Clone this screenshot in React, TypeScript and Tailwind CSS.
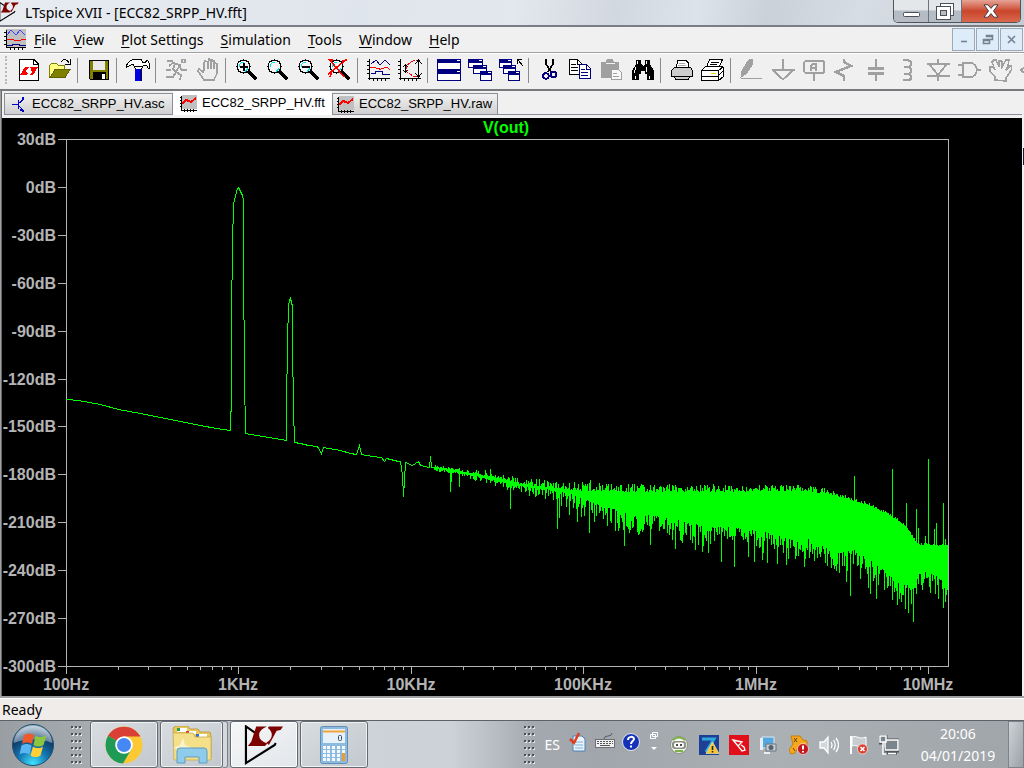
import type { ReactNode } from 'react'

// ============================================================
// TRACE DATA
// ============================================================
const PLOT = { left: 66, right: 948, top: 139, bottom: 666, decade: 172.4 }

const LOW_BAND =
  'M66 399L78 400L100 404L118 409L140 413L170 419L200 425L216 428L230 430L231 393L231 318L232 244L233 204L235 195L237 188L238 187L240 191L242 195L243 200L243 260L244 376L245 433L262 436L286 440L286 407L287 341L288 306L289 300L290 298L291 302L292 306L292 342L293 408L294 442L300 443L308 445L317 446L321 453L323 447L340 450L350 453L356 454L359 445L361 454L372 456L381 457L384 461L386 458L398 461L400 461L402 475L403 496L404 479L405 462L412 465L418 461L420 465L429 467L430 456L431 467L440 468'

// [x, y] knots of the noise band
const NOISE_TOP = [[434, 467], [460, 471], [480, 475], [500, 479], [520, 484], [550, 488], [583, 491], [640, 492], [700, 492], [800, 491], [830, 494], [850, 500], [870, 506], [885, 513], [895, 519], [905, 527], [912, 537], [918, 545], [949, 546]]
const NOISE_BOTTOM = [[434, 468], [460, 473], [480, 477], [500, 482], [520, 486], [550, 489], [567, 493], [600, 505], [633, 515], [650, 515], [667, 518], [700, 525], [733, 527], [767, 532], [800, 542], [810, 538], [833, 553], [857, 550], [867, 558], [883, 570], [900, 583], [913, 587], [920, 571], [933, 573], [949, 586]]
const TOP_JITTER = [[434, 2], [480, 4], [510, 6], [560, 9], [690, 8], [800, 7], [860, 3], [949, 2]]
const BOTTOM_JITTER = [[434, 3], [500, 6], [550, 11], [570, 18], [620, 22], [800, 22], [900, 20], [949, 14]]

const DIPS: Record<number, number> = {
  450: 492, 451: 482, 459: 487, 510: 509, 557: 529, 559: 518, 569: 515, 577: 522, 589: 533, 624: 546, 650: 545,
  675: 549, 682: 543, 695: 550, 702: 552, 708: 553, 721: 562, 734: 567, 748: 557, 754: 562, 762: 560, 767: 563,
  777: 564, 786: 565, 804: 567, 827: 566, 846: 582, 850: 596, 860: 579, 868: 588, 870: 594, 876: 599, 892: 600,
  897: 605, 901: 602, 905: 609, 908: 613, 913: 622, 916: 594, 922: 590, 930: 593, 935: 594, 938: 599, 943: 608, 945: 602,
}
const SPURS: Record<number, number> = {
  485: 470, 490: 469, 590: 480, 854: 476, 892: 469, 906: 503, 916: 509, 918: 528, 925: 536, 928: 459, 934: 529, 936: 523, 943: 503, 945: 539,
}

function lerp(knots: number[][], x: number) {
  const i = Math.max(1, knots.findIndex(k => k[0] >= x))
  const [x0, y0] = knots[i - 1]
  const [x1, y1] = knots[i]
  return y0 + ((x - x0) / (x1 - x0)) * (y1 - y0)
}

function buildNoise() {
  let seed = 82
  const rand = () => {
    seed = (seed * 1664525 + 1013904223) % 4294967296
    return seed / 4294967296
  }
  let d = ''
  for (let x = 434; x < PLOT.right; x++) {
    const up = lerp(TOP_JITTER, x) * rand() ** 1.6
    const down = lerp(BOTTOM_JITTER, x) * rand() ** 1.7
    const top = Math.min(SPURS[x] ?? 999, Math.round(lerp(NOISE_TOP, x) - up))
    const bottom = Math.max(DIPS[x] ?? 0, Math.round(lerp(NOISE_BOTTOM, x) + down), top + 1)
    d += `M${x} ${top}h1V${bottom}h-1z`
  }
  return d
}
const NOISE = buildNoise()

const Y_LABELS = ['30dB', '0dB', '-30dB', '-60dB', '-90dB', '-120dB', '-150dB', '-180dB', '-210dB', '-240dB', '-270dB', '-300dB']
const X_LABELS = ['100Hz', '1KHz', '10KHz', '100KHz', '1MHz', '10MHz']

function buildTicks() {
  let d = ''
  Y_LABELS.forEach((_, i) => { d += `M58 ${Math.round(PLOT.top + i * 47.9) + 0.5}H66` })
  X_LABELS.forEach((_, i) => {
    for (let m = 1; m < 10; m++) {
      const x = Math.round(PLOT.left + (i + Math.log10(m)) * PLOT.decade) + 0.5
      if (x < PLOT.right) d += `M${x} 667v${m === 1 ? 7 : 3}`
    }
  })
  return d
}
const TICKS = buildTicks()

function Plot() {
  return (
    <svg viewBox="2 118 1020 578" className="block h-full w-full font-['Liberation_Sans'] text-base font-bold" role="img" aria-label="V(out) spectrum">
      <g shapeRendering="crispEdges">
        <rect x="66.5" y="139.5" width="882" height="527" fill="none" stroke="#b4b4b4" />
        <path d={TICKS} stroke="#b4b4b4" fill="none" />
        <path d={LOW_BAND} stroke="#00ff00" fill="none" transform="translate(.5 .5)" />
        <path d={NOISE} fill="#00ff00" />
      </g>
      <text x="506" y="133" textAnchor="middle" fill="#00ff00">V(out)</text>
      {Y_LABELS.map((label, i) => (
        <text key={label} x="56" y={Math.round(145 + i * 47.9)} textAnchor="end" fill="#b4b4b4">{label}</text>
      ))}
      {X_LABELS.map((label, i) => (
        <text key={label} x={Math.round(66 + i * PLOT.decade)} y="690" textAnchor="middle" fill="#b4b4b4">{label}</text>
      ))}
    </svg>
  )
}

// ============================================================
// TOOLBAR ICONS (24px grid)
// ============================================================
const K = '#000000'
const G = '#a0a0a0'
const N = '#000080'

function Lens({ children }: { children?: ReactNode }) {
  return (
    <>
      <circle cx="8.500" cy="8.500" r="6.500" fill="#f4f4f4" stroke={K} strokeWidth="1.200" />
      <path d="M4.500 9V6.500l2-2H9M10 13.500l3-3" stroke="#00e5e5" fill="none" />
      <path d="M13.500 13.500l8 8" stroke={K} strokeWidth="3" />
      {children}
    </>
  )
}

function MiniWindow({ x, y, w = 12, h = 9 }: { x: number; y: number; w?: number; h?: number }) {
  return (
    <>
      <rect x={x + 0.5} y={y + 0.5} width={w - 1} height={h - 1} fill="#fff" stroke={N} />
      <rect x={x} y={y} width={w} height="4" fill={N} />
      <path d={`M${x + w - 4} ${y + 1.5}h3`} stroke="#fff" />
    </>
  )
}

const AXES = 'M2.500 1v21M1 20.500h22M0 3.500h2M0 7.500h2M0 11.500h2M0 15.500h2M6.500 20v3M10.500 20v3M14.500 20v3M18.500 20v3'

const ICONS: Record<string, ReactNode> = {
  New: (
    <>
      <path d="M2.500 1.500H17l4.500 4.500V22.500H2.500Z" fill="#fff" stroke={K} />
      <path d="M16.500 1.500V6.500H21.500" fill="none" stroke={K} />
      <path d="M3 17l5-8h4l-3 3v2l2 1-1 2zM12 9h9l-5 8h-3l2-3-1-3z" fill="#f00" />
    </>
  ),
  Open: (
    <>
      <path d="M1.500 19.500V7.500l2-2h5l2 2h6v4H7l-5 8z" fill="#ffff80" stroke="#808000" />
      <path d="M2 19.500l5-8h15l-5 8z" fill="#808000" stroke="#606000" />
      <path d="M13 4c2-4 6-3 8 1M22 1v5h-5" stroke={K} fill="none" />
    </>
  ),
  Save: (
    <>
      <path d="M2.500 2.500h19v19h-18l-1-1z" fill="#808000" stroke={K} />
      <path d="M6 3h12v9H6z" fill="#e8e8e8" />
      <path d="M6 14h13v8H6z" fill={K} />
      <path d="M15 16h3v5h-3z" fill="#fff" />
    </>
  ),
  'Control Panel': (
    <>
      <path d="M.5 9.500c0-4 3-7 7-8h8l1 3h3l1-2h1l2 3v5h-1l-2-3h-3l-2 3.500H9.500l-2-4c-3-1-5 1-7 2.500z" fill="#fff" stroke={K} />
      <path d="M9 8.500h7" stroke={K} />
      <path d="M9 11h7v12H9z" fill="#0000e0" />
      <path d="M14 11h2v12h-2z" fill={N} />
    </>
  ),
  Run: <path d="M17 1.500h3v3h-3zM2 3h6M1 12h5M4 8l4-3 7 2-4 7 5 3-1 5M11 14l-3 5H1M14 8l3 4h5M10 6l-2 5 4 4" fill="none" stroke={G} strokeWidth="1.800" />,
  Halt: <path d="M7 14L3 11 2 13l6 9h10l3-7V6l-2-1-1 6V3l-2-1-1 9V2l-2-1-1 10V4L9 3 8 5zM8 13V6" fill="#eee" stroke={G} strokeWidth="1.500" />,
  'Zoom In': <Lens><path d="M4.500 8.500h8M8.500 4.500v8" stroke={K} strokeWidth="2" /></Lens>,
  Zoom: <Lens />,
  'Zoom Back': <Lens><path d="M4.500 8.500h8" stroke={K} strokeWidth="2" /></Lens>,
  'Zoom Fit': <Lens><path d="M1 1l15 18M0 16L18 2M1 2h4M14 3l5-1M2 19l2-6" stroke="#f00" strokeWidth="1.500" /></Lens>,
  'Autorange': (
    <g fill="none">
      <path d={AXES} stroke={K} />
      <path d="M4 6l5-4 4 5 5-5 5 5M4 15h4v-2h7v3h8" stroke={N} />
      <path d="M3 10c5-3 7 2 11 1s6-3 9 1" stroke="#f00" />
    </g>
  ),
  'Toggle Log': (
    <g fill="none">
      <path d={AXES} stroke={K} />
      <path d="M22 2.500h-6l-8 5v6l8 5h6" stroke="#f00" strokeDasharray="4 1" />
      <path d="M20.500 3v15M17 6l3.500-4L24 6M17 15l3.500 4 3.500-4M7.500 7v7M5 9l2.500-2L10 9M5 12l2.500 2 2.500-2" stroke={K} />
    </g>
  ),
  'Tile Horizontally': (
    <>
      <MiniWindow x={0} y={1} w={24} h={11} />
      <MiniWindow x={0} y={12} w={24} h={11} />
    </>
  ),
  Cascade: (
    <>
      <MiniWindow x={0} y={1} w={15} />
      <MiniWindow x={5} y={7} w={14} />
      <MiniWindow x={12} y={13} h={10} />
    </>
  ),
  'Close All': (
    <>
      <MiniWindow x={0} y={1} w={13} />
      <MiniWindow x={4} y={7} w={13} />
      <MiniWindow x={9} y={13} h={10} />
      <path d="M18 1.500h5M18.500 1v5M19 2l5 6" stroke={K} />
    </>
  ),
  Cut: (
    <g fill="none">
      <path d="M8 1v5l5 8M15 1v5l-5 8" stroke={K} strokeWidth="1.800" />
      <circle cx="8" cy="18" r="2.800" stroke={N} strokeWidth="1.800" />
      <circle cx="15.500" cy="16.500" r="2.800" stroke={N} strokeWidth="1.800" />
    </g>
  ),
  Copy: (
    <>
      <path d="M.5 1.500h8l4 4v11H.5z" fill="#fff" stroke={K} />
      <path d="M2 6.500h5M2 9.500h7M2 12.500h7M8.500 2v4h4" stroke={K} fill="none" />
      <path d="M10.500 6.500h7l4 4v10h-11z" fill="#fff" stroke={N} />
      <path d="M12 11.500h4M12 14.500h7M12 17.500h7M17.500 7v4h4" stroke={N} fill="none" />
    </>
  ),
  Paste: (
    <>
      <path d="M1 4h5l1-3h6l1 3h5v16H1z" fill={G} />
      <path d="M6 5.500h9" stroke="#f0f0f0" />
      <path d="M11.500 11.500h7l3 3v7h-10z" fill="#f8f8f8" stroke={G} />
      <path d="M13 15.500h4M13 18.500h6" stroke={G} />
    </>
  ),
  Find: (
    <>
      <path d="M5 2h5v4l2 2 2-2V2h5v4l4 7v9h-7v-6h-2v-3h-4v3H8v6H1v-9l4-7z" fill={K} />
      <path d="M6.500 3v3M15.500 3v3M5 9l-2 6M16 9l-1 5M4 18v3M18 18v3" stroke="#fff" />
    </>
  ),
  'Print Preview': (
    <>
      <path d="M6.500 10l1-8h8l3 3v5" fill="#fff" stroke={K} />
      <path d="M4.500 9.500h16l2 3v6h-3l-1 3H6l-2-3H1.500v-6z" fill="#ccc" stroke={K} />
      <path d="M1.500 18.500h20" stroke={K} />
      <path d="M9 5.500h6M8 7.500h8" stroke="#aaa" />
    </>
  ),
  Print: (
    <>
      <path d="M5.500 9l3-7.500h13L18 9" fill="#fff" stroke={K} />
      <path d="M.5 12.500l4-4h17l1 2v8l-5 4H.5z" fill="#fff" stroke={K} />
      <path d="M.5 12.500h17v10M17.500 12.500l5-4M.5 18.500h17M10 4.500h8M9 6.500h7M18 17l4-4" stroke={K} fill="none" />
      <path d="M10 15.500h5" stroke="#e8e000" />
    </>
  ),
  Wire: <path d="M1 20.500h21M1 19l1-6 6-10 2-2h3l-1 6-6 9z" fill={G} stroke={G} />,
  Ground: <path d="M12 1v10M1 11.500h23M2 12l10 9.500L22 12" fill="none" stroke={G} strokeWidth="2" />,
  'Label Net': (
    <g fill="none" stroke={G}>
      <rect x="2" y="3" width="20" height="12" rx="2.500" strokeWidth="2.200" />
      <path d="M9 13V8l2-2h3v7M9 10h5M12 16v7" strokeWidth="2" />
    </g>
  ),
  Resistor: <path d="M11 1v3l7 4L3 14l8 4v5" fill="none" stroke={G} strokeWidth="2.400" />,
  Capacitor: <path d="M12 1v8M12 16v7" fill="none" stroke={G} strokeWidth="2" />,
  Inductor: <path d="M8 2h5l3 2v3l-2 2H9h5l2 2v3l-2 2H9h5l2 2v3l-2 1H8" fill="none" stroke={G} strokeWidth="2.400" />,
  Diode: <path d="M12 1v5M12 18v5M1 18h23M1 6h23M4 7l8 10 8-10" fill="none" stroke={G} strokeWidth="2" />,
  Component: <path d="M1 7h6M1 17h6M6 5h7c9 0 9 14 0 14H6zM19 12h5" fill="none" stroke={G} strokeWidth="2" />,
  Move: <path d="M7 22v-3l-5-6V9h3l2 3-3-8 2-2h2l3 7V3h2l1 1v5l4-7h3l-1 6-2 4 4-4h2v3l-4 6-2 3v3z" fill="#f0f0f0" stroke={G} strokeWidth="1.500" />,
  Drag: <path d="M2 12l4-3h14v9c-3-2-8-2-12-4H4z" fill="none" stroke={G} strokeWidth="2" />,
}
ICONS.Capacitor = (
  <>
    {ICONS.Capacitor}
    <path d="M4 9h16v3H4zM4 14h16v3H4z" fill={G} />
  </>
)

const TOOL_GROUPS = [
  ['New', 'Open'],
  ['Save'],
  ['Control Panel'],
  ['Run', 'Halt'],
  ['Zoom In', 'Zoom', 'Zoom Back', 'Zoom Fit'],
  ['Autorange', 'Toggle Log'],
  ['Tile Horizontally', 'Cascade', 'Close All'],
  ['Cut', 'Copy', 'Paste', 'Find'],
  ['Print Preview', 'Print'],
  ['Wire', 'Ground', 'Label Net', 'Resistor', 'Capacitor', 'Inductor', 'Diode', 'Component', 'Move', 'Drag'],
]

function Toolbar() {
  return (
    <div className="flex h-9 shrink-0 items-center overflow-hidden border-t border-white bg-[#f0f0f0] pb-[3px] pl-[5px]">
      <div className="mr-1 h-7 w-1 shrink-0 border-l-2 border-dotted border-[#b8b8b8]" />
      {TOOL_GROUPS.map((group, i) => (
        <div key={group[0]} className="flex shrink-0 items-center">
          {i > 0 && <div className="mr-[5px] ml-[2px] h-[25px] w-px bg-[#8c8c8c]" />}
          {group.map(name => (
            <button key={name} type="button" aria-label={name} className="flex h-8 w-[31px] items-center justify-center">
              <svg viewBox="0 0 24 24" className="size-6" shapeRendering="crispEdges">{ICONS[name]}</svg>
            </button>
          ))}
        </div>
      ))}
    </div>
  )
}

// ============================================================
// WINDOW CHROME
// ============================================================
function LogoMark({ className }: { className: string }) {
  return (
    <svg viewBox="0 0 40 41" className={className}>
      <path d="M11 8L1.500 1.500v37.500L31 20.500l1-2" fill="none" stroke="#000" strokeWidth="2.200" />
      <path d="M12 1.500h11q-8 3-8 9 0 6 8.500 8.500L21 21.500H3.500L7 17zM25 1.500h14.500L37 5l-4 1-8 14.500-2.500-2.500q5.500-3 5.500-8 0-4-4-7z" fill="#7b0000" />
    </svg>
  )
}

function TitleBar() {
  return (
    <header className="flex h-[27px] shrink-0 items-start border-b-2 border-[#7a7e84] bg-[linear-gradient(100deg,#e8ecf1_0%,#dfe5ec_35%,#e3e8ee_50%,#d2d8e0_60%,#dde3ea_68%,#cbd1d8_75%,#d7dde5_84%,#c5ccd4_100%)]">
      <LogoMark className="-ml-px h-6 w-5" />
      <h1 className="ml-[6px] flex-1 font-['Noto_Sans'] text-sm leading-[26px] text-black">LTspice XVII - [ECC82_SRPP_HV.fft]</h1>
      <div className="mr-[3px] flex h-[23px] overflow-hidden rounded-b-[5px] border border-t-0 border-[#50555c]">
        <button type="button" aria-label="Minimize" className="flex w-[35px] items-center justify-center border-r border-[#6d737a] bg-linear-to-b from-[#e4e7ea] from-45% to-[#b6bcc3] to-50%">
          <svg viewBox="0 0 17 12" className="h-3 w-[17px]"><rect x=".5" y="7.500" width="16" height="4" rx="1" fill="#fff" stroke="#4a4f5a" /></svg>
        </button>
        <button type="button" aria-label="Restore" className="flex w-[33px] items-center justify-center border-r border-[#6d737a] bg-linear-to-b from-[#e4e7ea] from-45% to-[#b6bcc3] to-50%">
          <svg viewBox="0 0 18 17" className="h-[17px] w-[18px]" fill="#fff" stroke="#4a4f5a">
            <rect x="4.500" y=".5" width="13" height="12" />
            <rect x=".5" y="3.500" width="14" height="13" />
            <rect x="4.500" y="7.500" width="6" height="5" fill="#b6bcc3" />
          </svg>
        </button>
        <button type="button" aria-label="Close" className="flex w-[58px] items-center justify-center bg-linear-to-b from-[#e5a396] from-0% via-[#c9452b] via-50% to-[#d9684c] to-100%">
          <svg viewBox="0 0 16 14" className="h-[14px] w-4"><path d="M1 .8h4l3 3.600 3-3.600h4L10.500 7l4.500 6.200h-4L8 9.600l-3 3.600H1L5.500 7z" fill="#fff" stroke="#4a3a44" /></svg>
        </button>
      </div>
    </header>
  )
}

const MENUS = ['File', 'View', 'Plot Settings', 'Simulation', 'Tools', 'Window', 'Help']

function MenuBar() {
  return (
    <nav className="flex h-[26px] shrink-0 items-center border-b border-[#a0a0a0] bg-[#f0f0f0] font-['Noto_Sans'] text-sm text-black">
      <svg viewBox="0 0 22 22" className="mr-2 ml-1 size-[22px]" shapeRendering="crispEdges">
        <rect x="2" width="20" height="18" fill="#c0c0c0" />
        <path d="M2.500 1v17M2 18.500h20M0 3.500h2M0 7.500h2M0 11.500h2M0 15.500h2M6.500 18v3M10.500 18v3M14.500 18v3M18.500 18v3" stroke="#000" fill="none" />
        <path d="M3 6l4-5 5 5 4-5 5 5" stroke="#4040ff" fill="none" />
        <path d="M3 11c4-3 7 1 10 1s5-2 9-2" stroke="#f00" fill="none" />
        <path d="M3 16.500h5v-1h7v1h7" stroke="#000080" fill="none" />
      </svg>
      <div className="flex flex-1 gap-[17px]">
        {MENUS.map(name => (
          <button key={name} type="button"><span className="underline underline-offset-2">{name[0]}</span>{name.slice(1)}</button>
        ))}
      </div>
      <div className="mr-px flex gap-px">
        {[
          ['Minimize document', 'M4 8.500h6'],
          ['Restore document', 'M5.500 4V2.500h6v4H9M5 3.500h6M2.500 6.500h6v4h-6zM2 7.500h6'],
          ['Close document', 'M3 3l7 7M10 3l-7 7'],
        ].map(([label, d]) => (
          <button key={label} type="button" aria-label={label} className="flex size-[23px] items-center justify-center border border-[#9aaabc] bg-[#deebf8]">
            <svg viewBox="0 0 13 13" className="size-[13px]"><path d={d} fill="none" stroke="#76828f" strokeWidth="1.600" /></svg>
          </button>
        ))}
      </div>
    </nav>
  )
}

function WaveIcon() {
  return (
    <svg viewBox="0 0 17 17" className="size-[17px]" shapeRendering="crispEdges">
      <rect x="2" width="15" height="14" fill="#c0c0c0" />
      <path d="M1.500 1v14H17M0 2.500h2M0 5.500h2M0 8.500h2M0 11.500h2M4.500 14v3M7.500 14v3M10.500 14v3M13.500 14v3" stroke="#000" fill="none" />
      <path d="M2 9l4-4 3 1 2 1 5-4" stroke="#f00" strokeWidth="2" fill="none" />
    </svg>
  )
}

function SchematicIcon() {
  return (
    <svg viewBox="0 0 17 17" className="size-[17px]" shapeRendering="crispEdges">
      <path d="M1 8.500h6M7.500 4v9M8 7l4-3V1M8 10l4 4v2M9 14h3" stroke="#0000c0" strokeWidth="1.300" fill="none" />
    </svg>
  )
}

function DocumentTabs() {
  return (
    <div className="flex h-[27px] shrink-0 items-start bg-[#f0f0f0] pl-[2px] font-['Liberation_Sans'] text-[13px] text-black">
      <button type="button" className="mt-[2px] flex h-[22px] w-[169px] items-center gap-1 border border-[#8a8e99] bg-linear-to-b from-[#f2f2f2] to-[#cfcfcf] pl-[6px]">
        <SchematicIcon />ECC82_SRPP_HV.asc
      </button>
      <button type="button" className="flex h-6 w-[159px] items-center gap-[5px] bg-white pl-[7px]">
        <WaveIcon />ECC82_SRPP_HV.fft
      </button>
      <button type="button" className="mt-[2px] flex h-[22px] w-[166px] items-center gap-[5px] border border-[#8a8e99] bg-linear-to-b from-[#f2f2f2] to-[#cfcfcf] pl-[4px]">
        <WaveIcon />ECC82_SRPP_HV.raw
      </button>
      <div className="h-6 flex-1 border-b border-[#8a8e99]" />
    </div>
  )
}

// ============================================================
// TASKBAR
// ============================================================
function Grip() {
  return (
    <svg viewBox="0 0 12 38" className="h-[38px] w-3 shrink-0" shapeRendering="crispEdges">
      {[0, 7, 14, 21, 28, 35].map(y => (
        <g key={y}>
          <path d={`M1 ${y + 1}h2v2h-2zM5 ${y + 1}h2v2h-2zM9 ${y + 1}h2v2h-2z`} fill="#e4e6e8" />
          <path d={`M0 ${y}h2v2h-2zM4 ${y}h2v2h-2zM8 ${y}h2v2h-2z`} fill="#4c5054" />
        </g>
      ))}
    </svg>
  )
}

function StartOrb() {
  return (
    <svg viewBox="0 0 44 44" className="size-11">
      <defs>
        <radialGradient id="orb" cx=".5" cy=".95" r=".9">
          <stop offset="0" stopColor="#3fe4ff" />
          <stop offset=".4" stopColor="#1478b4" />
          <stop offset=".75" stopColor="#0f3c66" />
          <stop offset="1" stopColor="#9ab4c8" />
        </radialGradient>
      </defs>
      <circle cx="22" cy="22" r="20.500" fill="url(#orb)" stroke="#24506e" />
      <path d="M3 20a19 17 0 0 1 38 0c-12-5-26-5-38 0z" fill="#fff" opacity=".4" />
      <path d="M13 12c3-2 6-2 10 0l-2 9c-3-2-7-2-10 0z" fill="#f0592a" />
      <path d="M24.500 12.500c3 2 7 2 11 0l-3 9.500c-3 2-7 2-10 0z" fill="#8cc63e" />
      <path d="M10.500 22.500c3-2 7-2 10 0l-2 9c-3-2-7-2-10 0z" fill="#5bb5f0" />
      <path d="M22 23.500c3 2 7 2 10 0l-2.500 9c-3 2-7 2-10 0z" fill="#ffd035" />
    </svg>
  )
}

function ChromeIcon() {
  return (
    <svg viewBox="0 0 38 38" className="size-[38px]">
      <circle cx="19" cy="19" r="18.500" fill="#fcc934" />
      <path d="M19 19L3 9.800A18.500 18.500 0 0 1 35 10H19z" fill="#d93f35" />
      <path d="M3 9.800A18.500 18.500 0 0 0 18 37.500L26.500 23 19 19z" fill="#1e9a55" />
      <path d="M19 10h16" stroke="#d93f35" />
      <circle cx="19" cy="19" r="8.800" fill="#fff" />
      <circle cx="19" cy="19" r="7" fill="#4587f3" />
    </svg>
  )
}

function ExplorerIcon() {
  return (
    <svg viewBox="0 0 40 38" className="h-[38px] w-10">
      <path d="M1 2l3-2h12l2 3h8l2 3h10l1 4v22H3z" fill="#e9c75a" stroke="#b8963a" strokeWidth=".8" />
      <path d="M5 2h10v4H5zM14 5h10v3H14zM24 8h11v3H24z" fill="#fff" />
      <path d="M5 2h3v3H5z" fill="#2e9e48" />
      <path d="M14 5h3v3h-3z" fill="#d43a2a" />
      <path d="M24 8h3v3h-3z" fill="#2b78c8" />
      <path d="M1 7h20l2 4h16v23H2z" fill="#f5e08a" stroke="#c9a94c" strokeWidth=".8" />
      <path d="M1 22l7-3 3-7 2 7 7 3-8 1-2 7-3-7z" fill="#fff" opacity=".6" />
      <path d="M5 37V25q0-3 3-3h24q3 0 3 3v12h-8v-6H13v6z" fill="#8fcbea" stroke="#5d9dc0" />
    </svg>
  )
}

function CalculatorIcon() {
  return (
    <svg viewBox="0 0 28 38" className="h-[38px] w-7">
      <rect x=".5" y=".5" width="27" height="37" rx="2" fill="#8dbbe0" stroke="#5f8fb8" />
      <rect x="3" y="3" width="22" height="14" fill="#e6f1fa" />
      <path d="M3 5.500h22" stroke="#f2a33a" strokeWidth="2" />
      <rect x="18.500" y="9.500" width="3" height="5" rx="1" fill="none" stroke="#324a66" />
      {[20, 24, 28, 32].map(y => (
        <path key={y} d={`M3 ${y}h3v3h-3zM7 ${y}h3v3h-3zM12 ${y}h3v3h-3zM17 ${y}h3v3h-3zM22 ${y}h3v3h-3z`} fill="#f4f9fd" />
      ))}
      <path d="M22 27h3v8h-3z" fill="#f09a28" />
    </svg>
  )
}

const TRAY: [string, ReactNode][] = [
  ['ActiveSync', (
    <>
      <circle cx="10" cy="10" r="8.500" fill="#f4f4f0" stroke="#8a8f80" />
      <path d="M4 5q6-5 12 0" stroke="#7cb342" strokeWidth="2" fill="none" />
      <rect x="3" y="6" width="14" height="8" rx="3" fill="#8b9084" />
      <rect x="5" y="7.500" width="10" height="5" rx="2" fill="#fff" />
      <path d="M7 9h2v2H7zM11 9h2v2h-2z" fill="#4a4e44" />
      <path d="M6 16h8" stroke="#7cb342" strokeWidth="2" />
    </>
  )],
  ['ZoneAlarm', (
    <>
      <path d="M0 0h20v20H0z" fill="#1d3f94" />
      <path d="M3 4h12L7 17" fill="none" stroke="#2fa8dc" strokeWidth="3" />
      <path d="M13.500 7L20 18.500H7z" fill="#f8c632" stroke="#fff3b0" strokeWidth=".6" />
      <path d="M13.500 11v4M13.500 16v1.500" stroke="#222" strokeWidth="1.600" />
    </>
  )],
  ['Radeon Settings', (
    <>
      <path d="M0 0h20v20H0z" fill="#e10f1a" />
      <path d="M4 5l9 2-4 4zM9 11l4 5 3-1-1-3-3-2" fill="none" stroke="#fff" strokeWidth="1.300" />
    </>
  )],
  ['Screen capture', (
    <>
      <path d="M3 2h12v11H3z" fill="#54a8e0" stroke="#dfe8ee" />
      <path d="M1 3h3v12H1z" fill="#e8eef2" />
      <path d="M7 9h10v7H7z" fill="#c4ccd4" stroke="#6c747c" />
      <circle cx="12" cy="12.500" r="2.500" fill="#566270" />
      <path d="M5 18h6" stroke="#e8eef2" strokeWidth="2" />
    </>
  )],
  ['Antivirus', (
    <>
      <path d="M2 1h9l3 4 4 1v7H9l-3 5-4 1-2-4 4-6z" fill="#f5a81c" stroke="#c77f0a" />
      <path d="M5 3l3 4M8 3L5 7M4 13l2 3" stroke="#6b4300" />
      <circle cx="14" cy="14" r="5.500" fill="#c4161c" stroke="#fff" strokeWidth=".6" />
      <path d="M14 10.500v4M14 16v1.500" stroke="#fff" strokeWidth="2" />
    </>
  )],
  ['Volume', (
    <g fill="none" stroke="#fff" strokeWidth="1.300">
      <path d="M1 7h4l4-5v16l-4-5H1z" fill="#fff" fillOpacity=".5" />
      <path d="M12 7q2 3 0 6M14.500 5q3.500 5 0 10M17 3q5 7 0 14" />
    </g>
  )],
  ['Action Center', (
    <>
      <path d="M2 1v18" stroke="#fff" strokeWidth="2" />
      <path d="M3 2c5-2 7 3 14 0v9c-7 3-9-2-14 0z" fill="#c8cccf" stroke="#fff" />
      <circle cx="13.500" cy="14" r="5" fill="#dc3e30" stroke="#fff" strokeWidth=".6" />
      <path d="M11.500 12l4 4M15.500 12l-4 4" stroke="#fff" strokeWidth="1.600" />
    </>
  )],
  ['Network', (
    <>
      <path d="M6 5h14v11H6zM1 0h6v8H1zM8 18h10" fill="none" stroke="#4f555a" strokeWidth="3" />
      <g fill="#7d858c" stroke="#fff" strokeWidth="1.500">
        <path d="M6 5h13v10H6zM9 18.500h8" />
        <path d="M1 1h6v6H1zM4 7v12h3" />
      </g>
    </>
  )],
]

const TASK_BUTTON = 'flex h-[47px] w-[68px] shrink-0 items-center justify-center rounded-[3px] border border-[#646a70] bg-linear-to-br from-[#d9dde0] to-[#c2c8ce] shadow-[inset_0_0_0_1px_#eef0f2]'

function Taskbar() {
  return (
    <footer className="flex h-12 shrink-0 items-center border-t border-[#5c6268] bg-[linear-gradient(90deg,#999ea2_0%,#a5aaae_8%,#cdd3d9_36%,#ccd2d8_44%,#b4babf_49%,#a3a9ae_52%,#a0a6ab_58%,#abb0b4_76%,#9fa5a9_100%)]">
      <button type="button" aria-label="Start" className="ml-[11px] shrink-0"><StartOrb /></button>
      <div className="ml-4"><Grip /></div>
      <div className="ml-[7px] flex gap-[2px]">
        <button type="button" aria-label="Google Chrome" className={TASK_BUTTON}><ChromeIcon /></button>
        <div className="flex w-[68px]">
          <button type="button" aria-label="Windows Explorer" className="flex h-[47px] w-[63px] items-center justify-center rounded-[3px] border border-[#646a70] bg-linear-to-br from-[#d9dde0] to-[#c2c8ce] shadow-[inset_0_0_0_1px_#eef0f2]"><ExplorerIcon /></button>
          <div className="h-[47px] w-[5px] rounded-r-[3px] border border-l-0 border-[#7c8288] bg-[#d5d9dd]" />
        </div>
        <button type="button" aria-label="LTspice XVII" className="flex h-[47px] w-[68px] items-center justify-center rounded-[3px] border border-[#646a70] bg-linear-to-br from-[#f6f7f8] to-[#e2e6ea] shadow-[inset_0_0_0_1px_#ffffff]"><LogoMark className="size-10" /></button>
        <button type="button" aria-label="Calculator" className={TASK_BUTTON}><CalculatorIcon /></button>
      </div>
      <div className="flex-1" />
      <Grip />
      <span className="ml-[9px] font-['Noto_Sans'] text-sm text-white">ES</span>
      <div className="mb-[6px] ml-[9px] flex items-center gap-[6px]">
        <svg viewBox="0 0 20 20" className="size-5">
          <path d="M4 4h9l3 3v12H4z" fill="#eaf3fb" stroke="#4a80b8" />
          <path d="M6 10h8M6 13h8M6 16h8" stroke="#7fb0dc" />
          <path d="M1 7l4 4L10 1" fill="none" stroke="#e03c1e" strokeWidth="2.500" />
        </svg>
        <svg viewBox="0 0 20 20" className="size-5">
          <path d="M9 7q0-3 4-3t4-3" fill="none" stroke="#5a6066" />
          <rect x=".5" y="7.500" width="19" height="8" fill="#f2f2f2" stroke="#6a6f74" />
          <path d="M2 9.500h16M2 11.500h16" stroke="#555" strokeDasharray="2 1" />
          <path d="M5 13.500h10" stroke="#555" />
        </svg>
        <svg viewBox="0 0 20 20" className="size-5">
          <circle cx="10" cy="10" r="8.500" fill="#1531b8" stroke="#dfe6f5" />
          <path d="M7 8c0-4 6-4 6-1 0 2-3 2-3 5M10 13.500v2" fill="none" stroke="#fff" strokeWidth="2" />
        </svg>
      </div>
      <svg viewBox="0 0 10 22" className="mb-[6px] ml-2 h-[22px] w-[10px]">
        <path d="M3.500 1.500h5v4h-5zM1.500 3.500h5v4h-5z" fill="#a3a9ae" stroke="#fff" />
        <path d="M2 16h6l-3 3z" fill="#fff" />
      </svg>
      <div className="ml-[10px] flex gap-[10px]">
        {TRAY.map(([name, art]) => (
          <button key={name} type="button" aria-label={name}><svg viewBox="0 0 20 20" className="size-5">{art}</svg></button>
        ))}
      </div>
      <div className="ml-[19px] w-20 text-center font-['Noto_Sans'] text-sm leading-[22px] text-white">
        <div>20:06</div>
        <div>04/01/2019</div>
      </div>
      <button type="button" aria-label="Show desktop" className="ml-[10px] h-full w-4 shrink-0 border border-[#7d8388] bg-linear-to-br from-[#cfd3d6] to-[#9ba1a6]" />
    </footer>
  )
}

export default function App() {
  return (
    <div className="flex h-screen flex-col overflow-hidden bg-[#f0f0f0]">
      <TitleBar />
      <MenuBar />
      <Toolbar />
      <main className="flex min-h-0 flex-1 border-t-2 border-[#77797c]">
        <div className="w-[2px] shrink-0 border-l border-[#a0a0a0] bg-[#696969]" />
        <div className="flex min-w-0 flex-1 flex-col">
          <DocumentTabs />
          <div className="min-h-0 flex-1 bg-black"><Plot /></div>
        </div>
        <div className="w-[2px] shrink-0 bg-[#f0f0f0] pt-[57px] pl-px"><div className="h-[17px] bg-[#1a1a30]" /></div>
      </main>
      <div className="h-6 shrink-0 border-t-2 border-[#a0a0a0] bg-[#f0ecea] pl-[2px] font-['Noto_Sans'] text-sm leading-6 text-black shadow-[inset_0_1px_0_#ffffff]">Ready</div>
      <Taskbar />
    </div>
  )
}
